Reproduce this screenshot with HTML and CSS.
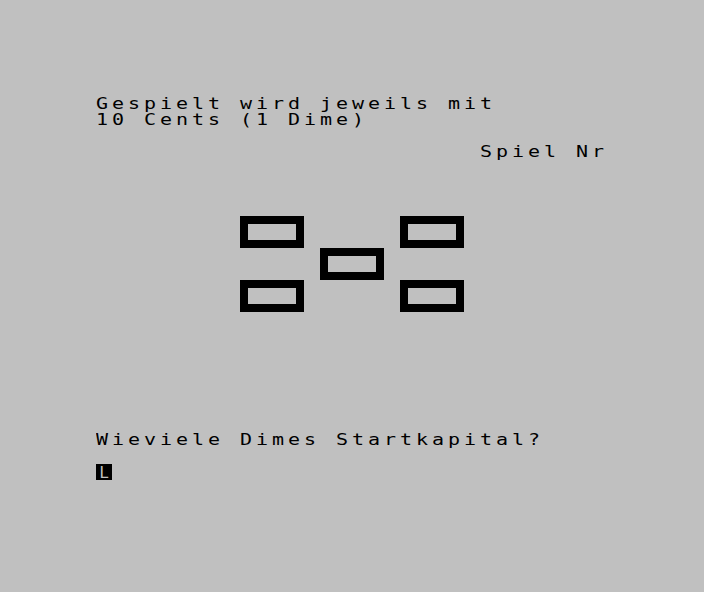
FILE: index.html
```html
<!DOCTYPE html>
<html lang="de">
<head>
    <meta charset="UTF-8">
    <title>Dimes</title>
    <link rel="stylesheet" href="styles.css">
</head>
<body>
    <div class="screen">
        <div class="line">Gespielt wird jeweils mit</div>
        <div class="line">10 Cents (1 Dime)</div>
        <div class="line"></div>
        <div class="line">                        Spiel Nr</div>
        <div class="board">
            <div class="slot tl"></div>
            <div class="slot tr"></div>
            <div class="slot mid"></div>
            <div class="slot bl"></div>
            <div class="slot br"></div>
        </div>
        <div class="line prompt">Wieviele Dimes Startkapital?</div>
        <div class="cursor">L</div>
    </div>
</body>
</html>
```
FILE: styles.css
```css
html, body {
    margin: 0;
    height: 100%;
    background: #c0c0c0;
}
.screen {
    width: 512px;
    height: 384px;
    padding: 96px 96px 112px 96px;
    color: #000;
    font-family: 'DejaVu Sans Mono', monospace;
    font-size: 16px;
}
/* one text row = 16px, 32 columns of 16px */
.line {
    height: 16px;
    line-height: 16px;
    white-space: pre;
    letter-spacing: 3.167px;
    transform: scaleX(1.25);
    transform-origin: 0 0;
}
.board {
    display: grid;
    grid-template-columns: 64px 64px 64px;
    grid-template-rows: 32px 32px 32px;
    column-gap: 16px;
    margin: 56px 0 0 144px;
}
.slot {
    border: 8px solid #000;
}
.tl { grid-column: 1; grid-row: 1; }
.tr { grid-column: 3; grid-row: 1; }
.mid { grid-column: 2; grid-row: 2; }
.bl { grid-column: 1; grid-row: 3; }
.br { grid-column: 3; grid-row: 3; }
.prompt {
    margin-top: 120px;
}
.cursor {
    margin-top: 16px;
    width: 16px;
    height: 16px;
    background: #000;
    color: #c0c0c0;
    font-size: 16px;
    line-height: 17px;
    text-align: center;
}
```
